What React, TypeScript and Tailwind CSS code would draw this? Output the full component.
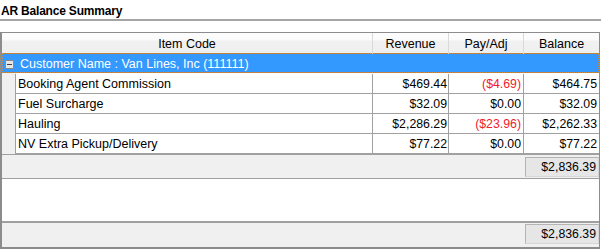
import React from "react";

type Line = { name: string; rev: string; pay: string; bal: string; neg: boolean };

const lines: Line[] = [
  { name: "Booking Agent Commission", rev: "$469.44", pay: "($4.69)", bal: "$464.75", neg: true },
  { name: "Fuel Surcharge", rev: "$32.09", pay: "$0.00", bal: "$32.09", neg: false },
  { name: "Hauling", rev: "$2,286.29", pay: "($23.96)", bal: "$2,262.33", neg: true },
  { name: "NV Extra Pickup/Delivery", rev: "$77.22", pay: "$0.00", bal: "$77.22", neg: false },
];

function CollapseIcon() {
  return (
    <svg width="9" height="9" viewBox="0 0 9 9" className="block">
      <rect x="0.5" y="0.5" width="8" height="8" fill="#e6e6e6" stroke="#8a8a8a" />
      <rect x="2" y="4" width="5" height="1" fill="#404040" />
    </svg>
  );
}

function TotalBox() {
  return (
    <div className="ml-auto w-[74px] h-[20px] bg-[#e6e6e6] border border-t-[#b4b4b4] border-l-[#b4b4b4] border-r-[#d6d6d6] border-b-[#d6d6d6] text-right pr-[2px] leading-[19px]">
      $2,836.39
    </div>
  );
}

export default function App() {
  return (
    <div className="w-[601px] h-[250px] bg-white text-black font-['Liberation_Sans',Arial,sans-serif] text-[12.3px] overflow-hidden">
      <div className="h-[21px] border-b-2 border-[#a5a5a5] pl-[1px] pt-[4px] font-bold text-[12px] leading-[14px] tracking-[-0.2px]">
        AR Balance Summary
      </div>

      <div className="mt-[11px] w-[600px] border-t border-r border-l-2 border-b-2 border-[#8c8c8c]">
        {/* column headers */}
        <div className="grid grid-cols-[371px_76px_75px_75px] h-[20px] text-[12.5px] bg-[linear-gradient(to_bottom,#fdfdfd_0%,#fbfbfb_35%,#f1f1f2_40%,#efeff0_100%)]">
          <div className="border-r border-[#dadada] text-center pt-[1px] leading-[20px]">Item Code</div>
          <div className="border-r border-[#dadada] text-center pt-[1px] leading-[20px]">Revenue</div>
          <div className="border-r border-[#dadada] text-center pt-[1px] leading-[20px]">Pay/Adj</div>
          <div className="text-center pt-[1px] leading-[20px]">Balance</div>
        </div>

        {/* group row */}
        <div className="h-[20px] bg-[#3399ff] border border-dotted border-[#c98a45] flex text-white">
          <div className="w-[16px] shrink-0 pl-[2px] pt-[6px]">
            <CollapseIcon />
          </div>
          <div className="pl-[1px] leading-[20px] text-[12.5px]">Customer Name : Van Lines, Inc (111111)</div>
        </div>

        {/* detail rows */}
        {lines.map((l, i) => (
          <div
            key={l.name}
            className={
              i === 0
                ? "grid grid-cols-[14px_357px_76px_75px_75px] h-[21px] pt-[1px] bg-[linear-gradient(to_right,#f0f0f0_14px,white_14px)]"
                : "grid grid-cols-[14px_357px_76px_75px_75px] h-[20px]"
            }
          >
            <div className="bg-[#f0f0f0] border-r border-[#a0a0a0]" />
            <div className="border-r border-b border-[#a0a0a0] pl-[2px] leading-[20px] overflow-hidden text-[12.5px]">{l.name}</div>
            <div className="border-r border-b border-[#a0a0a0] text-right pr-[1px] leading-[20px] overflow-hidden">{l.rev}</div>
            <div
              className={
                l.neg
                  ? "border-r border-b border-[#a0a0a0] text-right pr-[2px] leading-[20px] overflow-hidden text-[#f0202a]"
                  : "border-r border-b border-[#a0a0a0] text-right pr-[2px] leading-[20px] overflow-hidden"
              }
            >
              {l.pay}
            </div>
            <div className="border-b border-[#a0a0a0] text-right pr-[2px] leading-[20px] overflow-hidden">{l.bal}</div>
          </div>
        ))}

        {/* group summary */}
        <div className="h-[25px] border-t border-b border-[#a0a0a0] bg-[#f0f0f0] pt-[2px] flex">
          <TotalBox />
        </div>

        <div className="h-[42px] bg-white" />

        {/* grid footer */}
        <div className="h-[26px] border-t-2 border-[#a0a0a0] bg-[#f0f0f0] pt-[1px] flex">
          <TotalBox />
        </div>
      </div>
    </div>
  );
}
